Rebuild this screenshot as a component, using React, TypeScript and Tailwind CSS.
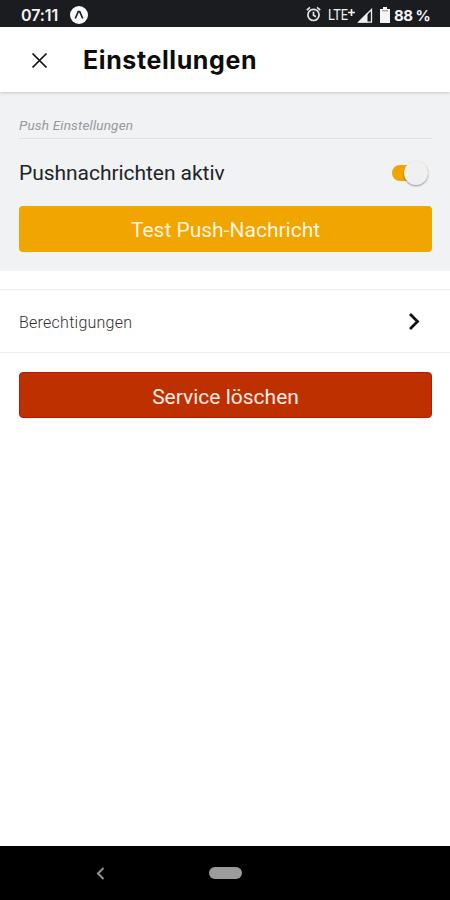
import React from 'react';

function StatusBar() {
  return (
    <div className="flex h-[27px] shrink-0 items-center bg-[#1b1c20] pl-[21px] pr-[20px] pt-[3px] font-['Inter',sans-serif] text-[16px] font-semibold leading-none text-[#f4f4f4]">
      <span className="w-[49px] tracking-[-0.1px]">07:11</span>
      <svg width="18" height="18" viewBox="0 0 18 18">
        <circle cx="9" cy="9" r="9" fill="#fafafa" />
        <path d="M5.3 12.5 8.2 5.6h1.6l2.9 6.9" fill="none" stroke="#1b1c20" strokeWidth="1.6" strokeLinejoin="round" />
      </svg>
      <div className="ml-auto flex items-center">
        <svg className="-mt-[2px]" width="15" height="16" viewBox="0 0 15 16" fill="none" stroke="#e6e6e6" strokeWidth="1.7">
          <circle cx="7.5" cy="8.9" r="5.6" />
          <path d="M7.5 5.7v3.6l2.4 1.5M.8 4.2 4 1.4M14.2 4.2 11 1.4" />
        </svg>
        <svg className="ml-[7px] overflow-visible" width="20" height="15" viewBox="0 0 20 15">
          <text x="0" y="12" textLength="20" lengthAdjust="spacingAndGlyphs" fill="#f0f0f0" className="font-['Roboto',sans-serif] text-[15px] font-normal">LTE</text>
        </svg>
        <svg className="-mt-[6px]" width="7" height="7" viewBox="0 0 7 7" stroke="#f4f4f4" strokeWidth="1.7">
          <path d="M3.5 0v7M0 3.5h7" />
        </svg>
        <svg className="ml-[2px]" width="16" height="15" viewBox="0 0 16 15">
          <path d="M14.5 1.5v12.7H1.8z" fill="none" stroke="#f0f0f0" strokeWidth="1.3" />
          <path d="M10.5 4.5V14.5H1z" fill="#f0f0f0" />
        </svg>
        <svg className="ml-[7px]" width="10" height="16" viewBox="0 0 10 16" fill="#f4f4f4">
          <path d="M3 0h4v2h3v14H0V2h3z" />
          <path d="M2 3.8h6" stroke="#8b8b8d" />
        </svg>
        <span className="ml-[4px] w-[36px] whitespace-nowrap text-[15px] font-bold tracking-[-0.5px]">88 %</span>
      </div>
    </div>
  );
}

function Header() {
  return (
    <header className="z-10 flex h-[65px] shrink-0 items-center bg-white pl-[31px] pt-[1px] shadow-[0_1px_3px_rgba(0,0,0,0.18)]">
      <svg width="17" height="17" viewBox="0 0 17 17" fill="none" stroke="#111" strokeWidth="1.7">
        <path d="m1.5 1.5 14 14m0-14-14 14" />
      </svg>
      <h1 className="ml-[35px] font-['Inter',sans-serif] text-[25px] font-bold leading-[30px] tracking-[0.6px] text-[#0c0c0d]">Einstellungen</h1>
    </header>
  );
}

function PushSettings() {
  return (
    <section className="h-[179px] shrink-0 bg-[#f0f2f4] pl-[19px] pr-[18px] pt-[23px]">
      <h2 className="h-[24px] border-b border-[#e0e2e4] text-[13.5px] font-normal italic leading-[20px] tracking-[0.18px] text-[#96989b]">Push Einstellungen</h2>
      <div className="flex h-[67px] items-center justify-between pr-[4px]">
        <span className="pt-[1px] text-[21px] leading-[26px] tracking-[-0.05px] text-[#232426]">Pushnachrichten aktiv</span>
        <div className="flex h-[16px] w-[36px] items-center justify-end rounded-full bg-[#f0a400]">
          <div className="h-[24px] w-[24px] shrink-0 rounded-full bg-[#f1f0f1] shadow-[0_1px_2px_rgba(0,0,0,0.4)]" />
        </div>
      </div>
      <button className="flex h-[46px] w-full items-center justify-center rounded-[4px] bg-[#f1a501] pt-[4px] text-[21px] text-[#fff4df]">Test Push-Nachricht</button>
    </section>
  );
}

export default function App() {
  return (
    <div className="flex h-[900px] w-[450px] flex-col overflow-hidden bg-white font-['Roboto',sans-serif]">
      <StatusBar />
      <Header />
      <PushSettings />
      <main className="flex flex-1 flex-col pt-[18px]">
        <div className="flex h-[64px] items-center justify-between border-y border-[#eeeff1] pl-[19px] pr-[29px]">
          <span className="pt-[3px] text-[16px] font-light tracking-[0.25px] text-[#303032]">Berechtigungen</span>
          <svg width="13" height="19" viewBox="0 0 13 19" fill="none" stroke="#111" strokeWidth="2.8">
            <path d="m2 2 7.5 7.5-7.5 7.5" />
          </svg>
        </div>
        <div className="pl-[19px] pr-[18px] pt-[19px]">
          <button className="flex h-[46px] w-full items-center justify-center rounded-[4px] border border-[#bd1608] bg-[#bf3000] pt-[5px] text-[21px] text-[#ffebe6]">Service löschen</button>
        </div>
      </main>
      <nav className="flex h-[54px] shrink-0 items-center bg-black pl-[96px]">
        <svg width="9" height="13" viewBox="0 0 9 13" fill="none" stroke="#929292" strokeWidth="2">
          <path d="M7.5 1 2 6.5 7.5 12" />
        </svg>
        <div className="ml-[104px] h-[12px] w-[33px] rounded-full bg-[#9b9b9b]" />
      </nav>
    </div>
  );
}
